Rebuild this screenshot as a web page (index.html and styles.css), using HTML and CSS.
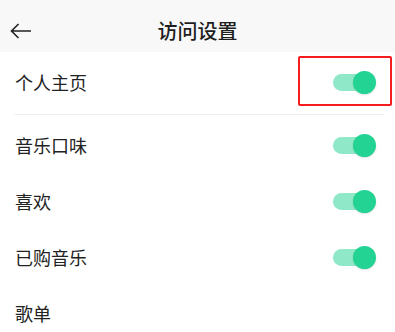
FILE: index.html
```html
<!DOCTYPE html>
<html lang="zh-CN">
<head>
<meta charset="utf-8">
<link rel="stylesheet" href="styles.css">
</head>
<body>
<div class="page">
  <header class="header">
    <svg class="back" width="22" height="16" viewBox="0 0 22 16">
      <path d="M21 8H1.5M8.5 1L1.5 8l7 7" fill="none" stroke="#222" stroke-width="1.6"/>
    </svg>
    <div class="title">访问设置</div>
  </header>
  <div class="list">
    <div class="row row-first">
      <span class="label">个人主页</span>
      <span class="toggle"><span class="track"></span><span class="thumb"></span></span>
      <div class="mark"></div>
    </div>
    <div class="divider"></div>
    <div class="row">
      <span class="label">音乐口味</span>
      <span class="toggle"><span class="track"></span><span class="thumb"></span></span>
    </div>
    <div class="row">
      <span class="label">喜欢</span>
      <span class="toggle"><span class="track"></span><span class="thumb"></span></span>
    </div>
    <div class="row">
      <span class="label">已购音乐</span>
      <span class="toggle"><span class="track"></span><span class="thumb"></span></span>
    </div>
    <div class="row">
      <span class="label">歌单</span>
    </div>
  </div>
</div>
</body>
</html>
```
FILE: styles.css
```css
html, body {
  margin: 0;
  padding: 0;
  background: #ffffff;
  overflow: hidden;
}
body {
  font-family: "Noto Sans CJK SC", "Noto Sans", sans-serif;
  color: #222222;
}
.page {
  width: 395px;
  height: 332px;
  overflow: hidden;
}
.header {
  position: relative;
  height: 52px;
  background: #f8f8f8;
  display: flex;
  align-items: center;
  justify-content: center;
}
.back {
  position: absolute;
  left: 10px;
  top: 23px;
}
.title {
  font-size: 20px;
  font-weight: 500;
  line-height: 1;
  margin-top: 10px;
  color: #1e1e1e;
}
.list {
  display: flex;
  flex-direction: column;
}
.row {
  position: relative;
  height: 56px;
  display: flex;
  align-items: center;
  justify-content: space-between;
  padding: 0 19px 0 15px;
}
.row-first {
  height: 60px;
}
.label {
  font-size: 18px;
  line-height: 1;
  color: #222222;
}
.toggle {
  position: relative;
  width: 43px;
  height: 23px;
  display: block;
}
.track {
  position: absolute;
  left: 0;
  top: 3px;
  width: 37px;
  height: 17px;
  border-radius: 9px;
  background: #8fe8c8;
}
.thumb {
  position: absolute;
  right: 0;
  top: 0;
  width: 23px;
  height: 23px;
  border-radius: 50%;
  background: #22d394;
  box-shadow: 0 1px 2px rgba(0, 0, 0, 0.12);
}
.mark {
  position: absolute;
  left: 298px;
  top: 4px;
  width: 90px;
  height: 46px;
  border: 2px solid #f41c1c;
  border-radius: 2px;
}
.divider {
  height: 1px;
  background: #efefef;
  margin: 2px 11px 2px 14px;
}
```
